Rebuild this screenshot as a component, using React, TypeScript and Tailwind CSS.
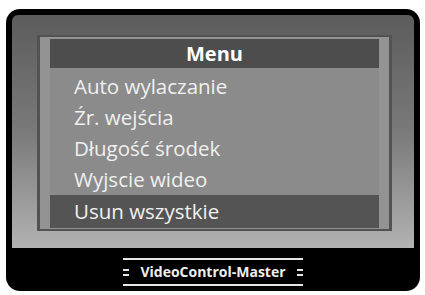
export default function App() {
  const items = ["Auto wylaczanie", "Źr. wejścia", "Długość środek", "Wyjscie wideo"]

  return (
    <div className="h-[295px] w-[425px] bg-white pl-[6px] pt-[9px] font-['Open_Sans',sans-serif]">
      <div className="flex h-[282px] w-[414px] flex-col rounded-[14px] bg-black px-[6px] pt-[6px]">
        {/* screen */}
        <div className="flex h-[233px] flex-col rounded-t-[6px] bg-gradient-to-b from-[#5c5c5c] via-[#7a7a7a] to-[#b2b2b2] px-[25px] pt-[20px]">
          <div className="flex h-[196px] w-[355px] flex-col border-x-[3px] border-y-[2px] border-[#525252] bg-[#939393] px-[10px] pt-[2px]">
            <div className="flex h-[29px] items-center justify-center bg-[#4d4d4d] text-[20px] font-bold leading-none text-white">
              Menu
            </div>
            <div className="flex flex-col bg-[#8b8b8b]">
              {items.map((item, i) => (
                <div
                  key={item}
                  className={`flex items-center pl-[24px] text-[20.5px] leading-none text-[#f0f0f0] ${i === 0 ? "h-[34px] pt-[2px]" : "h-[31px]"}`}
                >
                  {item}
                </div>
              ))}
              <div className="flex h-[33px] items-center bg-[#545454] pl-[24px] text-[20.5px] leading-none text-[#f0f0f0]">
                Usun wszystkie
              </div>
            </div>
          </div>
        </div>
        {/* label */}
        <div className="flex flex-1 items-center justify-center pt-[5px]">
          <div className="flex w-[180px] flex-col gap-[5px]">
            <div className="h-[2px] w-full bg-[#e6e6e6]" />
            <div className="flex items-center justify-between">
              <div className="flex flex-col gap-[3px]">
                <div className="h-[2px] w-[6px] bg-[#e6e6e6]" />
                <div className="h-[2px] w-[6px] bg-[#e6e6e6]" />
              </div>
              <span className="text-[14px] font-bold leading-none text-[#eeeeee]">VideoControl-Master</span>
              <div className="flex flex-col gap-[3px]">
                <div className="h-[2px] w-[6px] bg-[#e6e6e6]" />
                <div className="h-[2px] w-[6px] bg-[#e6e6e6]" />
              </div>
            </div>
            <div className="h-[2px] w-full bg-[#e6e6e6]" />
          </div>
        </div>
      </div>
    </div>
  )
}
